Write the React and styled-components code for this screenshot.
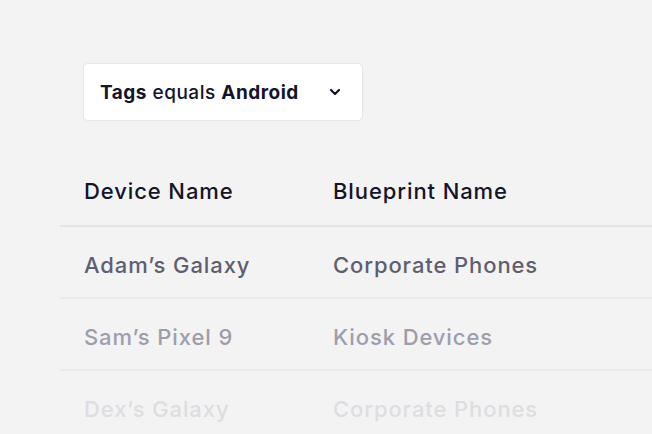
import React from "react";
import styled, { createGlobalStyle } from "styled-components";

const rows = [
  { device: "Adam’s Galaxy", blueprint: "Corporate Phones", tone: "#5f5e70" },
  { device: "Sam’s Pixel 9", blueprint: "Kiosk Devices", tone: "#9e9dab" },
  { device: "Dex’s Galaxy", blueprint: "Corporate Phones", tone: "#dddde2" },
];

export default function App() {
  return (
    <>
      <GlobalStyle />
      <Page>
        <FilterBar>
          <FilterButton>
            <FilterLabel>
              <b>Tags</b> equals <b>Android</b>
            </FilterLabel>
            <svg width="12" height="8" viewBox="0 0 12 8" fill="none">
              <path d="M2 2l4 4 4-4" stroke="#14142b" strokeWidth="2.2" strokeLinecap="round" strokeLinejoin="round" />
            </svg>
          </FilterButton>
        </FilterBar>

        <Table>
          <HeadRow>
            <HeadCell>Device Name</HeadCell>
            <HeadCell>Blueprint Name</HeadCell>
          </HeadRow>
          {rows.map(row => (
            <Row key={row.device} $tone={row.tone}>
              <Cell>{row.device}</Cell>
              <Cell>{row.blueprint}</Cell>
            </Row>
          ))}
        </Table>
      </Page>
    </>
  );
}

const GlobalStyle = createGlobalStyle`
  html, body {
    margin: 0;
    padding: 0;
    background: #f3f3f3;
    font-family: Inter, "Liberation Sans", sans-serif;
  }
`;

const Page = styled.div`
  width: 652px;
  height: 434px;
  overflow: hidden;
  background: #f3f3f3;
  padding-top: 63px;
  padding-left: 60px;
  box-sizing: border-box;
`;

const FilterBar = styled.div`
  display: flex;
  padding-left: 23px;
`;

const FilterButton = styled.button`
  display: flex;
  align-items: center;
  justify-content: space-between;
  width: 280px;
  height: 58px;
  padding: 0 21px 0 16px;
  box-sizing: border-box;
  background: #ffffff;
  border: 1px solid #e6e6e9;
  border-radius: 5px;
  cursor: pointer;
  font-family: inherit;
`;

const FilterLabel = styled.span`
  font-size: 19px;
  font-weight: 500;
  color: #14142b;
  letter-spacing: 0.5px;

  b {
    font-weight: 700;
  }
`;

const Table = styled.div`
  margin-top: 36px;
  display: flex;
  flex-direction: column;
`;

const HeadRow = styled.div`
  display: grid;
  grid-template-columns: 249px 1fr;
  height: 68px;
  align-items: center;
  border-bottom: 2px solid #e4e4e6;
  color: #14142b;
`;

const HeadCell = styled.div`
  padding-left: 24px;
  font-size: 22px;
  font-weight: 500;
  letter-spacing: 0.9px;
`;

const Row = styled.div`
  display: grid;
  grid-template-columns: 249px 1fr;
  height: 72px;
  padding-top: 6px;
  box-sizing: border-box;
  align-items: center;
  border-bottom: 2px solid #e9e9eb;
  color: ${props => props.$tone};
`;

const Cell = styled.div`
  padding-left: 24px;
  font-size: 22px;
  font-weight: 500;
  letter-spacing: 0.9px;
`;
